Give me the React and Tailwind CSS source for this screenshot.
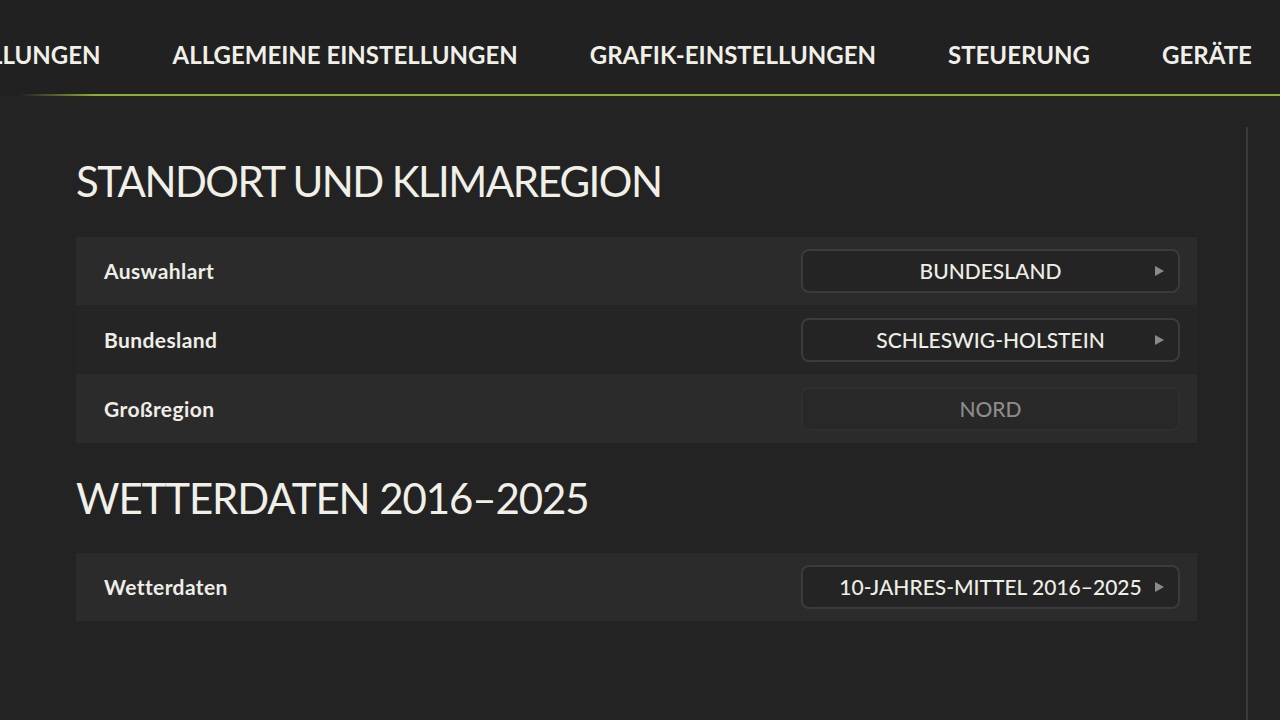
import React from 'react';

const tabs = ['LLUNGEN', 'ALLGEMEINE EINSTELLUNGEN', 'GRAFIK-EINSTELLUNGEN', 'STEUERUNG', 'GERÄTE'];

function Arrow() {
  return (
    <svg width="11" height="12" viewBox="0 0 11 12" className="shrink-0">
      <path d="M1 1 L10 6 L1 11 Z" fill="#8a8a8a" />
    </svg>
  );
}

function Select({ value, disabled }) {
  return (
    <div
      className={
        'relative flex h-[44px] w-[379px] items-center justify-center rounded-[8px] border-2 ' +
        (disabled ? 'border-[#2f2f2f] bg-[#282828]' : 'border-[#3b3b3b] bg-[#242424]')
      }
    >
      <span
        className={
          'text-[21px] font-medium ' +
          (disabled ? 'text-[#8c8c88]' : 'text-[#eeeee6]')
        }
      >
        {value}
      </span>
      {!disabled && (
        <span className="absolute right-[13px] top-1/2 -translate-y-1/2">
          <Arrow />
        </span>
      )}
    </div>
  );
}

function Row({ label, value, disabled, dark, h = 'h-[69px]' }) {
  return (
    <div
      className={
        'flex items-center justify-between pl-[28px] pr-[17px] ' +
        h +
        (dark ? ' bg-[#252525]' : ' bg-[#2b2b2b]')
      }
    >
      <span className="text-[21px] font-bold tracking-[0.4px] text-[#eeeee6]">{label}</span>
      <Select value={value} disabled={disabled} />
    </div>
  );
}

export default function App() {
  return (
    <div
      className="flex h-[720px] w-[1280px] flex-col overflow-hidden bg-[#232323] text-[#eeeee6]"
      style={{ fontFamily: 'Lato, "Noto Sans", sans-serif' }}
    >
      {/* tab bar */}
      <div className="relative h-[96px] shrink-0 bg-[#212121]">
        <div className="-ml-[10px] flex h-[95px] items-center gap-[72px] pt-[14px]">
          {tabs.map((t) => (
            <span key={t} className="whitespace-nowrap text-[24px] font-bold text-[#f0f0e8]">
              {t}
            </span>
          ))}
        </div>
        <div className="absolute bottom-0 left-[20px] right-0 h-[2px] bg-gradient-to-r from-[#5a6a2a]/0 via-[#8db12e] via-[6%] to-[#8db12e]" />
      </div>

      <div className="flex flex-1">
        <div className="flex-1 pl-[76px] pr-[49px]">
          <h1 className="mt-[64px] text-[42px] font-normal leading-none tracking-[-1.55px] text-[#f0f0e8]">
            STANDORT UND KLIMAREGION
          </h1>
          <div className="mt-[35px] flex flex-col">
            <Row label="Auswahlart" value="BUNDESLAND" h="h-[68px]" />
            <Row label="Bundesland" value="SCHLESWIG-HOLSTEIN" dark />
            <Row label="Großregion" value="NORD" disabled />
          </div>

          <h2 className="mt-[34px] text-[42px] font-normal leading-none tracking-[-1.1px] text-[#f0f0e8]">
            WETTERDATEN 2016–2025
          </h2>
          <div className="mt-[34px]">
            <Row label="Wetterdaten" value="10-JAHRES-MITTEL 2016–2025" h="h-[68px]" />
          </div>
        </div>
        <div className="mr-[32px] mt-[31px] w-[2px] bg-[#3a3a3a]" />
      </div>
    </div>
  );
}
